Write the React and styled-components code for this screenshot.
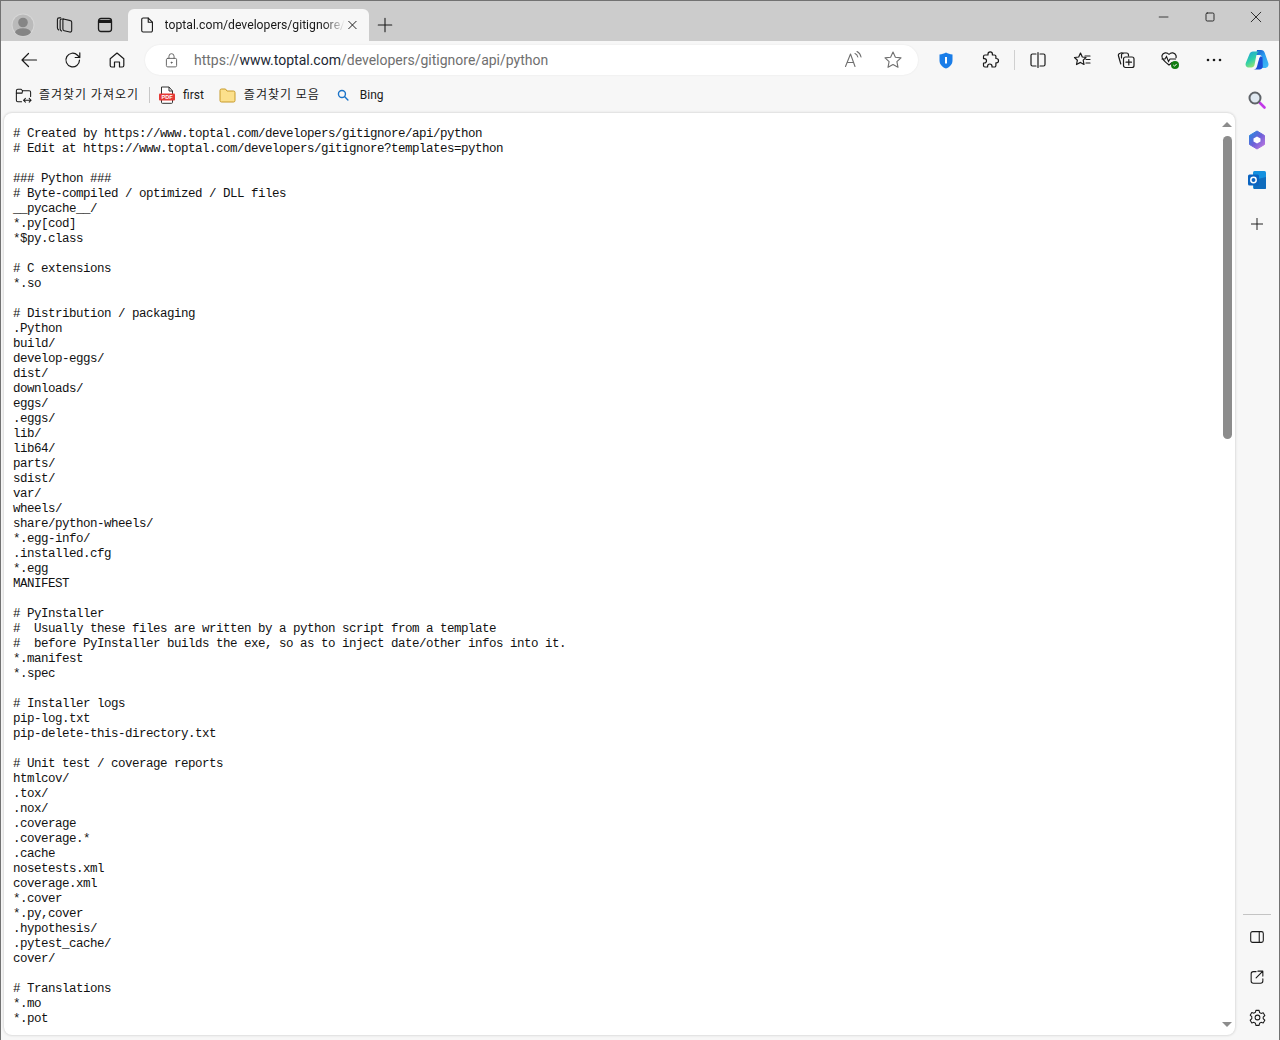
import React from "react";
import styled, { createGlobalStyle } from "styled-components";

const GlobalStyle = createGlobalStyle`
  html, body {
    margin: 0;
    padding: 0;
    height: 1040px;
    overflow: hidden;
    background: #f7f7f7;
  }
`;

const uiFont = `Roboto, "Noto Sans CJK KR", sans-serif`;

const Browser = styled.div`
  width: 1280px;
  height: 1040px;
  box-sizing: border-box;
  border: 1px solid #727272;
  border-bottom: 0;
  display: flex;
  flex-direction: column;
  background: #f7f7f7;
  font-family: ${uiFont};
  color: #1a1a1a;
`;

const TitleBar = styled.div`
  height: 40px;
  flex: none;
  background: #cccccc;
  display: flex;
  align-items: flex-end;
`;

const TitleIcon = styled.div`
  width: ${(p) => p.$w || 42}px;
  height: 32px;
  flex: none;
  display: flex;
  align-items: center;
  justify-content: center;
`;

const Tab = styled.div`
  width: 241px;
  height: 32px;
  flex: none;
  margin-left: 1px;
  background: #f7f7f7;
  border-radius: 6px 6px 0 0;
  display: flex;
  align-items: center;
  padding: 0 9px 0 10px;
  box-sizing: border-box;
`;

const TabTitle = styled.span`
  flex: 1;
  margin-left: 8px;
  font-size: 12.2px;
  white-space: nowrap;
  -webkit-mask-image: linear-gradient(to right, #000 88%, transparent 100%);
  mask-image: linear-gradient(to right, #000 88%, transparent 100%);
`;

const TitleSpacer = styled.div`
  flex: 1;
`;

const WinButton = styled.div`
  width: 46px;
  height: 32px;
  align-self: flex-start;
  display: flex;
  align-items: center;
  justify-content: center;
`;

const Toolbar = styled.div`
  height: 38px;
  flex: none;
  display: flex;
  align-items: center;
  padding-left: 6px;
`;

const ToolButton = styled.div`
  width: ${(p) => p.$w || 44}px;
  height: 32px;
  flex: none;
  display: flex;
  align-items: center;
  justify-content: center;
`;

const AddressBar = styled.div`
  width: 773px;
  height: 30px;
  flex: none;
  margin: 0 6px;
  border-radius: 15px;
  background: #ffffff;
  box-shadow: 0 0 2px rgba(0, 0, 0, 0.08);
  display: flex;
  align-items: center;
  box-sizing: border-box;
  padding-left: 18px;
`;

const Url = styled.span`
  margin-left: 14px;
  flex: 1;
  font-size: 14px;
  color: #6f6f6f;
  white-space: nowrap;
`;

const UrlHost = styled.span`
  color: #1c2733;
`;

const AddressAction = styled.div`
  width: 40px;
  display: flex;
  justify-content: center;
`;

const AddressEnd = styled.div`
  width: 5px;
  flex: none;
`;

const ToolDivider = styled.div`
  width: 1px;
  height: 20px;
  flex: none;
  margin: 0 1px 0 2px;
  background: #d0d0d0;
`;

const Workspace = styled.div`
  flex: 1;
  min-height: 0;
  display: flex;
`;

const ContentColumn = styled.div`
  flex: 1;
  min-width: 0;
  display: flex;
  flex-direction: column;
`;

const BookmarkBar = styled.div`
  height: 32px;
  flex: none;
  display: flex;
  align-items: center;
  padding-left: 13px;
`;

const Bookmark = styled.div`
  display: flex;
  align-items: center;
  gap: ${(p) => p.$gap || 7}px;
  margin-right: ${(p) => p.$mr || 0}px;
  font-size: 12px;
  white-space: nowrap;
`;

const BookmarkKo = styled.span`
  font-family: "Noto Sans CJK KR", sans-serif;
  font-size: 12px;
  letter-spacing: 1px;
  line-height: 16px;
  margin-top: -2px;
`;

const BookmarkDivider = styled.div`
  width: 1px;
  height: 16px;
  background: #c8c8c8;
  margin: 0 9px 0 10px;
`;

const Page = styled.div`
  flex: 1;
  min-height: 0;
  margin: 2px 0 5px 3px;
  border-radius: 8px;
  background: #ffffff;
  box-shadow: 0 0 3px rgba(0, 0, 0, 0.22);
  display: flex;
  overflow: hidden;
`;

const Source = styled.pre`
  flex: 1;
  margin: 0;
  padding: 14px 0 0 9px;
  font-family: "Liberation Mono", monospace;
  font-size: 12.5px;
  letter-spacing: -0.501px;
  line-height: 15px;
  color: #111111;
  overflow: hidden;
`;

const ScrollRail = styled.div`
  width: 14px;
  margin-right: 1px;
  flex: none;
  display: flex;
  flex-direction: column;
  align-items: center;
  padding: 9px 0 8px;
  box-sizing: border-box;
`;

const Arrow = styled.div`
  width: 0;
  height: 0;
  border-left: 5px solid transparent;
  border-right: 5px solid transparent;
  border-bottom: ${(p) => (p.$down ? "0" : "5px solid #8c8c8c")};
  border-top: ${(p) => (p.$down ? "5px solid #8c8c8c" : "0")};
`;

const Thumb = styled.div`
  width: 9px;
  height: 303px;
  margin-top: 9px;
  background: #8c8c8c;
  border-radius: 4.5px;
`;

const RailSpacer = styled.div`
  flex: 1;
`;

const Sidebar = styled.div`
  width: 44px;
  flex: none;
  display: flex;
  flex-direction: column;
  align-items: center;
  padding: 1px 0 3px;
  box-sizing: border-box;
`;

const SideIcon = styled.div`
  width: 36px;
  height: ${(p) => p.$h || 40}px;
  flex: none;
  display: flex;
  align-items: center;
  justify-content: center;
`;

const SideSpacer = styled.div`
  flex: 1;
`;

const SideDivider = styled.div`
  width: 28px;
  height: 1px;
  margin-bottom: 2px;
  background: #c4c4c4;
`;

const Stroke = ({ size = 20, w = 1.2, color = "#1a1a1a", children }) => (
  <svg width={size} height={size} viewBox="0 0 20 20" fill="none" stroke={color} strokeWidth={w} strokeLinecap="round" strokeLinejoin="round">
    {children}
  </svg>
);

const Profile = () => (
  <svg width="24" height="24" viewBox="0 0 24 24">
    <defs>
      <clipPath id="avatarClip">
        <circle cx="12" cy="12" r="11" />
      </clipPath>
    </defs>
    <circle cx="12" cy="12" r="11.500" fill="#d6d6d6" />
    <circle cx="12" cy="12" r="10.500" fill="#bababa" />
    <g clipPath="url(#avatarClip)">
      <circle cx="12" cy="9.500" r="4.800" fill="#858585" />
      <ellipse cx="12" cy="20" rx="8" ry="4.800" fill="#858585" />
    </g>
  </svg>
);

const SOURCE = `# Created by https://www.toptal.com/developers/gitignore/api/python
# Edit at https://www.toptal.com/developers/gitignore?templates=python

### Python ###
# Byte-compiled / optimized / DLL files
__pycache__/
*.py[cod]
*$py.class

# C extensions
*.so

# Distribution / packaging
.Python
build/
develop-eggs/
dist/
downloads/
eggs/
.eggs/
lib/
lib64/
parts/
sdist/
var/
wheels/
share/python-wheels/
*.egg-info/
.installed.cfg
*.egg
MANIFEST

# PyInstaller
#  Usually these files are written by a python script from a template
#  before PyInstaller builds the exe, so as to inject date/other infos into it.
*.manifest
*.spec

# Installer logs
pip-log.txt
pip-delete-this-directory.txt

# Unit test / coverage reports
htmlcov/
.tox/
.nox/
.coverage
.coverage.*
.cache
nosetests.xml
coverage.xml
*.cover
*.py,cover
.hypothesis/
.pytest_cache/
cover/

# Translations
*.mo
*.pot
`;

export default function App() {
  return (
    <>
      <GlobalStyle />
      <Browser>
        <TitleBar>
          <TitleIcon $w={44}><Profile /></TitleIcon>
          <TitleIcon $w={38}>
            <Stroke size={22} w={1}>
              <path d="M9.500 4.500l6.300 1.500a1.500 1.500 0 0 1 1.200 1.500v7.500a1.500 1.500 0 0 1-1.800 1.400l-5-1.200a1.500 1.500 0 0 1-1.200-1.500V5.500a1 1 0 0 1 .5-1z" />
              <path d="M9.500 4.500H8a1.500 1.500 0 0 0-1.500 1.500v7.500c0 1 .5 1.500 1.200 2" />
              <path d="M7 3.500H5.500A1.500 1.500 0 0 0 4 5v7.500c0 1 .5 1.500 1.200 2" />
            </Stroke>
          </TitleIcon>
          <TitleIcon $w={44}>
            <svg width="16" height="16" viewBox="0 0 16 16" fill="none">
              <rect x="1.500" y="1.500" width="13" height="13" rx="2.500" stroke="#1a1a1a" strokeWidth="1.300" />
              <path d="M2 4.500h12" stroke="#1a1a1a" strokeWidth="3" />
            </svg>
          </TitleIcon>
          <Tab>
            <Stroke w={1.2}>
              <path d="M5.500 2.500h5.500L15.500 7v9a1.500 1.500 0 0 1-1.500 1.500H5.500A1.500 1.500 0 0 1 4 16V4a1.500 1.500 0 0 1 1.500-1.500z" />
              <path d="M11 2.500V7h4.500" />
            </Stroke>
            <TabTitle>toptal.com/developers/gitignore/</TabTitle>
            <Stroke size={16} w={1.3}><path d="M5 5l10 10M15 5L5 15" /></Stroke>
          </Tab>
          <TitleIcon $w={32}>
            <Stroke w={1.2} size={18}><path d="M10 2.500v15M2.500 10h15" /></Stroke>
          </TitleIcon>
          <TitleSpacer />
          <WinButton><Stroke size={16} w={1}><path d="M4 10h11" /></Stroke></WinButton>
          <WinButton><Stroke size={16} w={1.1}><rect x="5" y="5" width="10" height="10" rx="1.500" /></Stroke></WinButton>
          <WinButton><Stroke size={16} w={1.1}><path d="M4 4l12 12M16 4L4 16" /></Stroke></WinButton>
        </TitleBar>

        <Toolbar>
          <ToolButton>
            <Stroke><path d="M17.500 10H3M9.500 3.500L3 10l6.500 6.500" /></Stroke>
          </ToolButton>
          <ToolButton>
            <Stroke><path d="M16.500 10a6.800 6.800 0 1 1-2-4.800l2.300 2.300M16.800 2.800v4.700h-4.600" /></Stroke>
          </ToolButton>
          <ToolButton>
            <Stroke><path d="M3.200 8.700L10 3l6.800 5.700v6.800a1.500 1.500 0 0 1-1.500 1.500h-2.800v-5h-5v5H4.700a1.500 1.500 0 0 1-1.500-1.500z" /></Stroke>
          </ToolButton>
          <AddressBar>
            <Stroke size={17} color="#5f5f5f" w={1.1}>
              <rect x="4" y="7.500" width="12" height="10" rx="1.500" />
              <path d="M7 7.500V5a3 3 0 0 1 6 0v2.500" />
              <circle cx="10" cy="12.500" r=".6" fill="#5f5f5f" />
            </Stroke>
            <Url>https://<UrlHost>www.toptal.com</UrlHost>/developers/gitignore/api/python</Url>
            <AddressAction>
              <Stroke color="#6f6f6f" w={1.1}>
                <path d="M2.500 16.500L7.500 4l4.500 12.500M4.200 12.500h6.500" />
                <path d="M12 3.500c1.500.6 2.500 2 2.800 3.500M14 1.500c2 1 3.500 3 4 5.500" />
              </Stroke>
            </AddressAction>
            <AddressAction>
              <Stroke color="#6f6f6f" w={1.1}>
                <path d="M10 2l2.400 5.200 5.600.7-4.100 3.800 1.100 5.600L10 14.500l-5 2.800 1.100-5.600L2 7.900l5.600-.7z" />
              </Stroke>
            </AddressAction>
            <AddressEnd />
          </AddressBar>
          <ToolButton>
            <svg width="14" height="17" viewBox="0 0 14 17">
              <path d="M7 .5c1.800 1.200 4 1.800 6.500 2V8.500c0 3.800-2.500 6.500-6.500 8-4-1.500-6.500-4.200-6.500-8V2.500C3 2.300 5.200 1.700 7 .5z" fill="#1a7de8" />
              <rect x="6" y="5" width="2" height="6.500" fill="#ffffff" />
            </svg>
          </ToolButton>
          <ToolButton>
            <Stroke w={1.2}>
              <path d="M8 5V4a2.200 2.200 0 0 1 4.400 0v1h2a1.500 1.500 0 0 1 1.500 1.500v2h.4a2.200 2.200 0 0 1 0 4.400h-.4v2.600a1.500 1.500 0 0 1-1.500 1.500H12v-.8a2.200 2.200 0 0 0-4.400 0v.8H5a1.500 1.500 0 0 1-1.500-1.500V13h.8a2.200 2.200 0 0 0 0-4.400h-.8V6.500A1.500 1.500 0 0 1 5 5z" />
            </Stroke>
          </ToolButton>
          <ToolDivider />
          <ToolButton>
            <Stroke w={1.2}>
              <path d="M8 4H4.500A1.500 1.500 0 0 0 3 5.500v9A1.500 1.500 0 0 0 4.500 16H8M12 4h3.500A1.500 1.500 0 0 1 17 5.500v9a1.500 1.500 0 0 1-1.500 1.500H12M10 2.500v15" />
            </Stroke>
          </ToolButton>
          <ToolButton>
            <Stroke w={1.2}>
              <path d="M8.500 3l1.800 4 3.700.5-2.800 2.600.8 4.400-3.500-2.100-4 2.100.9-4.300L2.500 7.500l4.200-.5z" />
              <path d="M13 6h5M14 9.500h4M14 13h4" />
            </Stroke>
          </ToolButton>
          <ToolButton>
            <Stroke w={1.2}>
              <path d="M7 3.500a2 2 0 0 0-2-.5l-1 .3A2 2 0 0 0 2.500 6l2.300 8" />
              <path d="M5.500 8V5a2 2 0 0 1 2-2h3a2 2 0 0 1 2 2v1" />
              <rect x="7.500" y="7" width="10.500" height="10.500" rx="2" />
              <path d="M12.800 9.500v5.500M10 12.200h5.500" />
            </Stroke>
          </ToolButton>
          <ToolButton>
            <svg width="22" height="20" viewBox="0 0 22 20" fill="none">
              <path d="M10 4.500C8 2 4 2.500 3 5.500c-.8 2.500 1 5 7 9.500 1-.6 2-1.500 3-2.500M10 4.500c2-2.500 6-2 7 1 .3 1 .2 1.800 0 2.700" stroke="#1a1a1a" strokeWidth="1.200" />
              <path d="M2.500 9h3.500l1.500-2.500 2 5 1.500-2.500h6" stroke="#1a1a1a" strokeWidth="1.100" />
              <circle cx="16" cy="15" r="4" fill="#107c10" />
              <path d="M14.300 15l1.200 1.200 2.200-2.300" stroke="#ffffff" strokeWidth="1" />
            </svg>
          </ToolButton>
          <ToolButton>
            <svg width="16" height="4" viewBox="0 0 16 4" fill="#1a1a1a">
              <circle cx="2" cy="2" r="1.300" />
              <circle cx="8" cy="2" r="1.300" />
              <circle cx="14" cy="2" r="1.300" />
            </svg>
          </ToolButton>
          <ToolButton $w={42}>
            <svg width="25" height="25" viewBox="0 0 25 25">
              <defs>
                <linearGradient id="copLeft" x1="0" y1="0" x2="0.6" y2="1">
                  <stop offset="0" stopColor="#1f9be0" />
                  <stop offset=".55" stopColor="#2fd0a8" />
                  <stop offset="1" stopColor="#a8e66a" />
                </linearGradient>
                <linearGradient id="copRight" x1="0.2" y1="0" x2="0.8" y2="1">
                  <stop offset="0" stopColor="#1a5fd0" />
                  <stop offset=".4" stopColor="#2a9cf0" />
                  <stop offset="1" stopColor="#3fb8f5" />
                </linearGradient>
              </defs>
              <path d="M12 2h4c2 0 3.200 1 3.800 3l3.500 10c.8 2.800-.8 5-3.500 5H15l2-9c.5-2.500-.5-4-3-4h-3z" fill="url(#copRight)" />
              <path d="M8 3.500h8C13 3.500 12 5 11.200 8L9.500 17c-.3 1.500-1.500 2.500-3 2.500H4c-2.600 0-4-2-3.200-4.500L4.500 6C5 4.500 6.300 3.500 8 3.500z" fill="url(#copLeft)" />
              <path d="M17.500 10c.5-1.800-2.500-2.300-3.200-.2L12 18.500c-.6 2-1.700 3-3.500 3h6c1.800 0 2.800-1 3.300-2.800z" fill="#1c4fd6" />
              <path d="M11.500 15.500l2-6.500c.3-1 1-1.500 1.800-1.500-.8 1.500-2 5.500-3.800 8z" fill="#ffffff" opacity=".9" />
            </svg>
          </ToolButton>
        </Toolbar>

        <Workspace>
          <ContentColumn>
            <BookmarkBar>
              <Bookmark $gap={6}>
                <Stroke size={19} w={1.1}>
                  <path d="M8 16.500H4a1.500 1.500 0 0 1-1.500-1.500V5A1.500 1.500 0 0 1 4 3.500h3.500L9 5h7a1.500 1.500 0 0 1 1.500 1.500V11" />
                  <path d="M2.500 7.500h6L9 5M10 15h8M12 13l-2 2 2 2M16 13l2 2-2 2" />
                </Stroke>
                <BookmarkKo>즐겨찾기 가져오기</BookmarkKo>
              </Bookmark>
              <BookmarkDivider />
              <Bookmark $gap={8} $mr={15}>
                <svg width="16" height="18" viewBox="0 0 16 18">
                  <path d="M2.500 1h7.500l3.500 4v11.500a.8.8 0 0 1-.8.8H3.300a.8.8 0 0 1-.8-.8z" fill="#ffffff" stroke="#333333" />
                  <path d="M10 1v4h3.500" fill="none" stroke="#333333" />
                  <rect x="0" y="7.500" width="16" height="7" rx="1" fill="#e53935" />
                  <text x="8" y="13" textAnchor="middle" fontFamily="Liberation Sans, sans-serif" fontSize="5.500" fontWeight="700" fill="#ffffff">PDF</text>
                </svg>
                <span>first</span>
              </Bookmark>
              <Bookmark $gap={8} $mr={16}>
                <svg width="17" height="15" viewBox="0 0 17 15">
                  <path d="M1 2.500A1.500 1.500 0 0 1 2.500 1h4L8 3h6.500A1.500 1.500 0 0 1 16 4.500v8a1.500 1.500 0 0 1-1.500 1.500h-12A1.500 1.500 0 0 1 1 12.500z" fill="#fce08c" stroke="#c79a2a" />
                </svg>
                <BookmarkKo>즐겨찾기 모음</BookmarkKo>
              </Bookmark>
              <Bookmark $gap={10}>
                <Stroke size={14} w={2} color="#1a73c8">
                  <circle cx="8.500" cy="8.500" r="5" />
                  <path d="M12.500 12.500l4.500 4.500" />
                </Stroke>
                <span>Bing</span>
              </Bookmark>
            </BookmarkBar>
            <Page>
              <Source>{SOURCE}</Source>
              <ScrollRail>
                <Arrow />
                <Thumb />
                <RailSpacer />
                <Arrow $down />
              </ScrollRail>
            </Page>
          </ContentColumn>
          <Sidebar>
            <SideIcon>
              <svg width="20" height="20" viewBox="0 0 20 20" fill="none">
                <path d="M12.500 12.500l5 5" stroke="#c239e8" strokeWidth="2.600" strokeLinecap="round" />
                <circle cx="8" cy="8" r="5.500" fill="#dfe8f0" stroke="#5f6368" strokeWidth="2" />
              </svg>
            </SideIcon>
            <SideIcon>
              <svg width="20" height="20" viewBox="0 0 20 20">
                <defs>
                  <linearGradient id="m365" x1="0" y1="0" x2="1" y2="1">
                    <stop offset="0" stopColor="#1f8ee0" />
                    <stop offset=".5" stopColor="#6d5fd8" />
                    <stop offset="1" stopColor="#c77ae0" />
                  </linearGradient>
                </defs>
                <path d="M10 1l7.500 4.500v9L10 19l-7.500-4.500v-9z" fill="url(#m365)" stroke="url(#m365)" strokeLinejoin="round" />
                <path d="M10 6.500l3.500 2v3l-3.500 2-3.500-2v-3z" fill="#ffffff" />
              </svg>
            </SideIcon>
            <SideIcon>
              <svg width="20" height="20" viewBox="0 0 20 20">
                <rect x="6" y="1" width="13" height="18" rx="1.500" fill="#1490df" />
                <path d="M7 10l12-3v11a1 1 0 0 1-1 1H7z" fill="#0f6cbd" />
                <rect x="1" y="4.500" width="11" height="11" rx="1.500" fill="#0b64c0" />
                <circle cx="6.500" cy="10" r="2.700" fill="none" stroke="#ffffff" strokeWidth="1.500" />
              </svg>
            </SideIcon>
            <SideIcon $h={48}>
              <Stroke size={16} w={1.200}><path d="M10 3v14M3 10h14" /></Stroke>
            </SideIcon>
            <SideSpacer />
            <SideDivider />
            <SideIcon>
              <Stroke size={18} w={1.200}>
                <rect x="3" y="4" width="14" height="12" rx="2" />
                <path d="M12.500 4v12" />
              </Stroke>
            </SideIcon>
            <SideIcon>
              <Stroke size={18} w={1.200}>
                <path d="M9 4H6a2.500 2.500 0 0 0-2.500 2.500v8A2.500 2.500 0 0 0 6 17h8a2.500 2.500 0 0 0 2.500-2.500V12" />
                <path d="M11 3.500h5.500V9M16.500 3.500L9 11" />
              </Stroke>
            </SideIcon>
            <SideIcon>
              <Stroke size={19} w={1.100}>
                <circle cx="10" cy="10" r="2.500" />
                <path d="M8.300 2.500h3.400l.5 2.300 1.500.9 2.300-.7 1.700 2.900-1.700 1.600v1.800l1.700 1.600-1.700 2.900-2.300-.7-1.500.9-.5 2.300H8.300l-.5-2.300-1.500-.9-2.300.7-1.700-2.900 1.700-1.600V9.200L2.300 7.600 4 4.700l2.300.7 1.500-.9z" />
              </Stroke>
            </SideIcon>
          </Sidebar>
        </Workspace>
      </Browser>
    </>
  );
}
